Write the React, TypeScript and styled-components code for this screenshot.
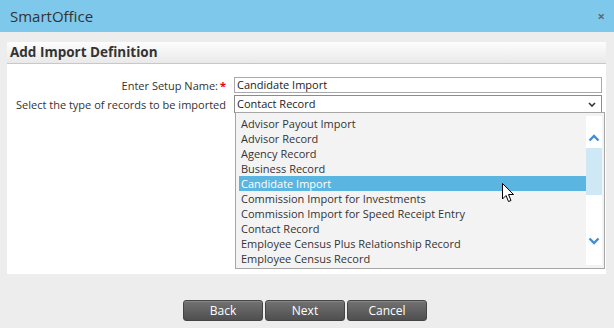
import React from 'react'
import styled, { createGlobalStyle } from 'styled-components'

const GlobalStyle = createGlobalStyle`
  html, body {
    margin: 0;
    padding: 0;
    background: #eeeeee;
    font-family: 'Open Sans', 'Liberation Sans', sans-serif;
    color: #333;
  }
`;

const Dialog = styled.div`
  width: 614px;
  height: 328px;
  background: #ededed;
  overflow: hidden;
`;

const TitleBar = styled.div`
  height: 32px;
  background: #7ec8eb;
  display: flex;
  align-items: center;
  justify-content: space-between;
  padding: 0 9px 0 10px;
  box-sizing: border-box;
`;

const Title = styled.div`
  font-size: 15px;
  color: #333;
`;

const Close = styled.div`
  font-size: 13px;
  font-weight: 700;
  color: #5a6a72;
  line-height: 1;
`;

const Main = styled.div`
  padding: 10px 8px 0 7px;
`;

const Panel = styled.div`
  background: #fff;
`;

const PanelHeader = styled.div`
  height: 21px;
  line-height: 21px;
  padding-left: 3px;
  font-size: 13.5px;
  font-weight: 700;
  color: #333;
  background: linear-gradient(#fdfdfd, #e9e9e9);
  border-bottom: 1px solid #c8c8c8;
`;

const PanelBody = styled.div`
  height: 210px;
  padding: 13px 4px 0 0;
  box-sizing: border-box;
`;

const Form = styled.div`
  display: grid;
  grid-template-columns: 219px 368px;
  column-gap: 8px;
  row-gap: 2px;
  font-size: 11px;
`;

const Label = styled.label`
  text-align: right;
  align-self: center;
  white-space: nowrap;
`;

const Required = styled.span`
  color: #e00;
  font-weight: 700;
  margin-left: 2px;
`;

const TextInput = styled.div`
  height: 16px;
  line-height: 14px;
  border: 1px solid #a9a9a9;
  box-sizing: border-box;
  padding-left: 2px;
  font-size: 11px;
  color: #222;
`;

const SelectBox = styled.div`
  position: relative;
  height: 18px;
  line-height: 16px;
  border: 1px solid #8c8c8c;
  box-sizing: border-box;
  padding-left: 2px;
  font-size: 11px;
  color: #222;
  display: flex;
  justify-content: space-between;
  align-items: center;
`;

const SelectArrow = styled.svg`
  margin-right: 5px;
`;

const Listbox = styled.div`
  position: absolute;
  top: 16px;
  left: 0px;
  width: 370px;
  height: 157px;
  border: 1px solid #a6a6a6;
  box-sizing: border-box;
  background: #f3f3f3;
  display: flex;
  z-index: 2;
`;

const Options = styled.ul`
  list-style: none;
  margin: 3px 0 0 3px;
  padding: 0;
  flex: 1;
`;

const Option = styled.li<{ $selected?: boolean }>`
  height: 15px;
  line-height: 15px;
  padding-left: 2px;
  font-size: 11px;
  white-space: nowrap;
  color: ${({ $selected }) => ($selected ? '#fff' : '#333')};
  background: ${({ $selected }) => ($selected ? '#5bb5e1' : 'transparent')};
`;

const Scrollbar = styled.div`
  width: 16px;
  margin: 3px 2px 3px 0;
  background: #fff;
  display: flex;
  flex-direction: column;
  align-items: center;
`;

const ScrollArrow = styled.svg<{ $top: number }>`
  margin-top: ${({ $top }) => $top}px;
  flex-shrink: 0;
`;

const Thumb = styled.div`
  width: 16px;
  height: 47px;
  margin-top: 6px;
  background: #cfe8f6;
`;

const Cursor = styled.svg`
  position: absolute;
  left: 266px;
  top: 70px;
  z-index: 3;
`;

const Footer = styled.div`
  display: flex;
  justify-content: center;
  gap: 2px;
  padding-top: 26px;
  padding-right: 3px;
`;

const Button = styled.button`
  width: 80px;
  height: 21px;
  border: 1px solid #454545;
  border-radius: 3px;
  background: linear-gradient(#727272, #4f4f4f);
  box-shadow: inset 0 1px 0 rgba(255, 255, 255, 0.15);
  color: #fff;
  font-family: 'Open Sans', 'Liberation Sans', sans-serif;
  font-size: 12px;
  padding: 0;
  line-height: 19px;
`;

const records = [
  'Advisor Payout Import',
  'Advisor Record',
  'Agency Record',
  'Business Record',
  'Candidate Import',
  'Commission Import for Investments',
  'Commission Import for Speed Receipt Entry',
  'Contact Record',
  'Employee Census Plus Relationship Record',
  'Employee Census Record',
]

function Chevron({ up, top }: { up?: boolean; top: number }) {
  return (
    <ScrollArrow $top={top} width="12" height="8" viewBox="0 0 12 8">
      <polyline
        points={up ? '1.5,6.5 6,2 10.5,6.5' : '1.5,1.5 6,6 10.5,1.5'}
        fill="none"
        stroke="#3f8fd6"
        strokeWidth="2.4"
      />
    </ScrollArrow>
  )
}

export default function App() {
  const selected = 'Candidate Import'
  return (
    <Dialog>
      <GlobalStyle />
      <TitleBar>
        <Title>SmartOffice</Title>
        <Close>×</Close>
      </TitleBar>
      <Main>
        <Panel>
          <PanelHeader>Add Import Definition</PanelHeader>
          <PanelBody>
            <Form>
              <Label>
                Enter Setup Name:<Required>*</Required>
              </Label>
              <TextInput>Candidate Import</TextInput>
              <Label>Select the type of records to be imported</Label>
              <SelectBox>
                Contact Record
                <SelectArrow width="8" height="5" viewBox="0 0 8 5">
                  <polyline points="1,1 4,4 7,1" fill="none" stroke="#333" strokeWidth="1.6" />
                </SelectArrow>
                <Listbox>
                  <Options>
                    {records.map((r) => (
                      <Option key={r} $selected={r === selected}>
                        {r}
                      </Option>
                    ))}
                  </Options>
                  <Scrollbar>
                    <Chevron up top={18} />
                    <Thumb />
                    <Chevron top={42} />
                  </Scrollbar>
                  <Cursor width="13" height="21" viewBox="0 0 13 21">
                    <path
                      d="M0.5,0.5 L0.5,16 L4,12.5 L6.5,18.5 L9,17.5 L6.5,11.5 L11.5,11.5 Z"
                      fill="#fff"
                      stroke="#000"
                      strokeWidth="1"
                      strokeLinejoin="miter"
                    />
                  </Cursor>
                </Listbox>
              </SelectBox>
            </Form>
          </PanelBody>
        </Panel>
        <Footer>
          <Button>Back</Button>
          <Button>Next</Button>
          <Button>Cancel</Button>
        </Footer>
      </Main>
    </Dialog>
  )
}
